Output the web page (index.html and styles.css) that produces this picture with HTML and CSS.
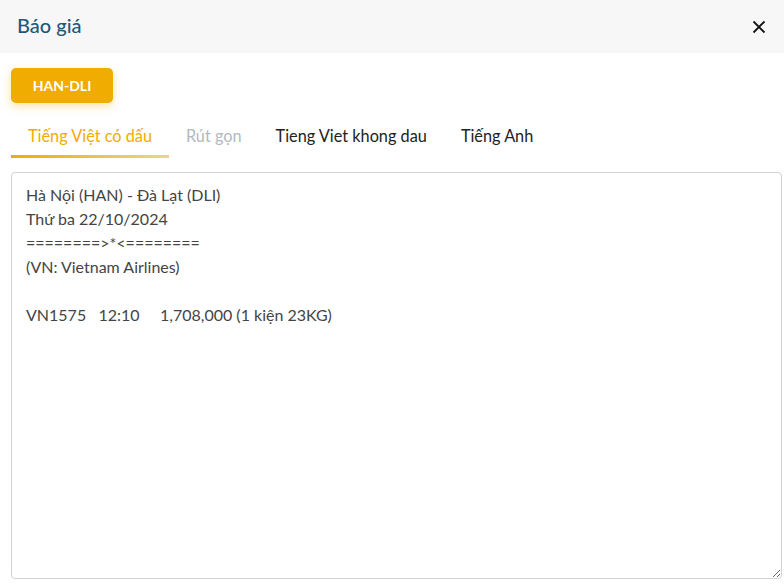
FILE: index.html
```html
<!DOCTYPE html>
<html lang="vi">
<head>
    <meta charset="UTF-8">
    <meta name="viewport" content="width=device-width, initial-scale=1.0">
    <title>Báo giá</title>
    <link rel="stylesheet" href="styles.css">
</head>
<body>
    <header class="modal-header">
        <h1 class="modal-title">Báo giá</h1>
        <button class="close-btn" type="button" aria-label="Đóng">
            <svg width="14" height="14" viewBox="0 0 14 14">
                <path d="M1.5 1.5 L12.5 12.5 M12.5 1.5 L1.5 12.5" stroke="#111" stroke-width="1.8" fill="none"/>
            </svg>
        </button>
    </header>
    <div class="modal-body">
        <div class="routes">
            <button class="route-btn" type="button">HAN-DLI</button>
        </div>
        <nav class="tabs">
            <a class="tab active">Tiếng Việt có dấu</a>
            <a class="tab disabled">Rút gọn</a>
            <a class="tab">Tieng Viet khong dau</a>
            <a class="tab">Tiếng Anh</a>
        </nav>
        <textarea class="quote-text" readonly>Hà Nội (HAN) - Đà Lạt (DLI)
Thứ ba 22/10/2024
========>*<========
(VN: Vietnam Airlines)

VN1575   12:10     1,708,000 (1 kiện 23KG)</textarea>
    </div>
</body>
</html>
```

FILE: styles.css
```css
body {
    font-family: Lato, "Noto Sans", sans-serif;
    background-color: #fff;
    margin: 0;
    padding: 0;
}
.modal-header {
    display: flex;
    align-items: center;
    justify-content: space-between;
    height: 53px;
    padding: 0 18px 0 17px;
    background-color: #f7f7f8;
}
.modal-title {
    margin: 0 0 3px;
    font-size: 20px;
    font-weight: 500;
    color: #1d5a7a;
}
.close-btn {
    border: none;
    background: none;
    padding: 0;
    cursor: pointer;
    display: flex;
}
.modal-body {
    padding: 15px 2px 0 11px;
}
.routes {
    display: flex;
    gap: 10px;
}
.route-btn {
    width: 102px;
    height: 35px;
    border: none;
    border-radius: 5px;
    background-color: #f0ac00;
    color: #fff;
    font-family: Lato, sans-serif;
    font-weight: 700;
    font-size: 14px;
    box-shadow: 0 3px 10px rgba(240, 172, 0, 0.35);
    cursor: pointer;
}
.tabs {
    display: flex;
    margin-top: 17px;
}
.tab {
    padding: 6px 17px 10px;
    font-size: 16.3px;
    color: #222;
    border-bottom: 3px solid transparent;
    cursor: pointer;
}
.tab.active {
    color: #f0ac00;
    border-image: linear-gradient(to right, #eeab0b, #ead58e) 1;
}
.tab.disabled {
    color: #b3b8c2;
}
.quote-text {
    display: block;
    box-sizing: border-box;
    width: 771px;
    height: 407px;
    margin-top: 14px;
    padding: 10px 14px;
    border: 1px solid #d2d2d2;
    border-radius: 4px;
    font-family: Lato, sans-serif;
    font-size: 16px;
    line-height: 24px;
    color: #444;
    outline: none;
}
```
